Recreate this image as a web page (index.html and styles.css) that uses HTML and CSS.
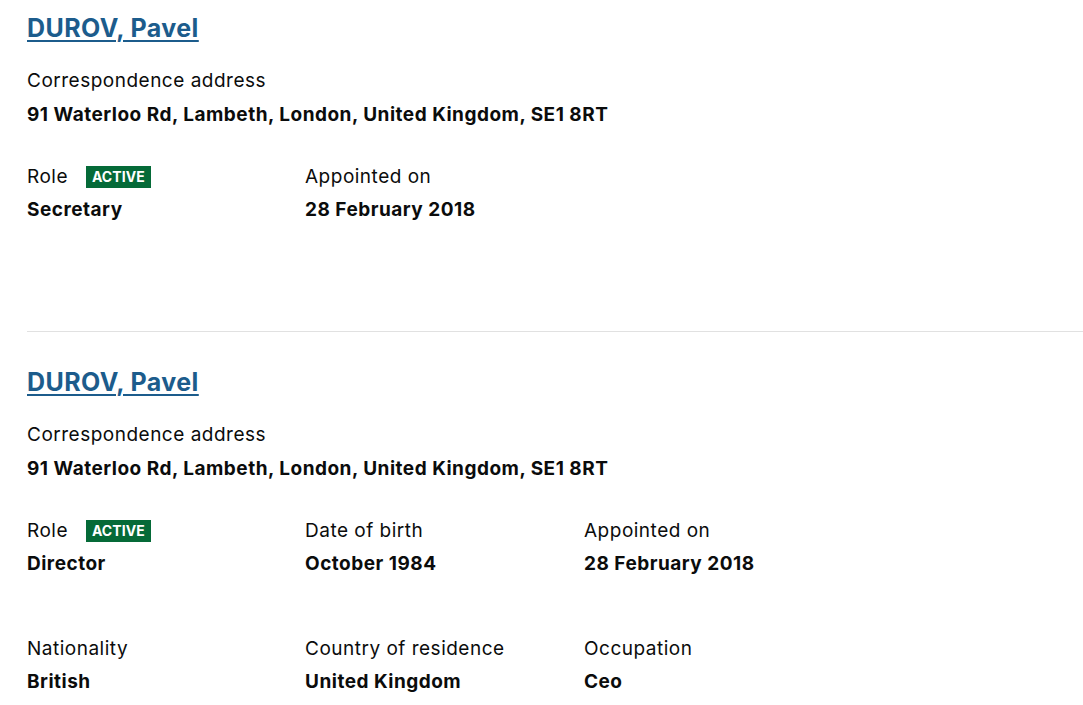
FILE: index.html
```html
<!DOCTYPE html>
<html lang="en">
<head>
<meta charset="utf-8">
<title>Officers</title>
<link rel="stylesheet" href="styles.css">
</head>
<body>
<main class="page">
  <section class="officer">
    <h2 class="officer-name"><a href="#">DUROV, Pavel</a></h2>
    <dl class="field">
      <dt class="label">Correspondence address</dt>
      <dd class="value">91 Waterloo Rd, Lambeth, London, United Kingdom, SE1 8RT</dd>
    </dl>
    <div class="grid">
      <dl class="field">
        <dt class="label">Role <span class="badge">Active</span></dt>
        <dd class="value">Secretary</dd>
      </dl>
      <dl class="field">
        <dt class="label">Appointed on</dt>
        <dd class="value">28 February 2018</dd>
      </dl>
    </div>
  </section>
  <section class="officer">
    <h2 class="officer-name"><a href="#">DUROV, Pavel</a></h2>
    <dl class="field">
      <dt class="label">Correspondence address</dt>
      <dd class="value">91 Waterloo Rd, Lambeth, London, United Kingdom, SE1 8RT</dd>
    </dl>
    <div class="grid">
      <dl class="field">
        <dt class="label">Role <span class="badge">Active</span></dt>
        <dd class="value">Director</dd>
      </dl>
      <dl class="field">
        <dt class="label">Date of birth</dt>
        <dd class="value">October 1984</dd>
      </dl>
      <dl class="field">
        <dt class="label">Appointed on</dt>
        <dd class="value">28 February 2018</dd>
      </dl>
      <dl class="field">
        <dt class="label">Nationality</dt>
        <dd class="value">British</dd>
      </dl>
      <dl class="field">
        <dt class="label">Country of residence</dt>
        <dd class="value">United Kingdom</dd>
      </dl>
      <dl class="field">
        <dt class="label">Occupation</dt>
        <dd class="value">Ceo</dd>
      </dl>
    </div>
  </section>
</main>
</body>
</html>
```
FILE: styles.css
```css
html, body {
  margin: 0;
  padding: 0;
  background: #ffffff;
}
body {
  font-family: Inter, "Open Sans", "Liberation Sans", Arial, sans-serif;
  color: #0b0c0c;
  font-size: 19px;
  line-height: 25px;
  letter-spacing: 0.5px;
}
.page {
  padding: 13px 0 0 27px;
}
.officer {
  padding-bottom: 37px;
}
.officer + .officer {
  border-top: 1px solid #e1e1e1;
  padding-top: 35px;
}
.officer:first-child {
  padding-bottom: 109px;
}
.officer-name {
  margin: 0 0 25px;
  font-size: 25px;
  line-height: 30px;
  font-weight: 700;
  letter-spacing: 0.4px;
}
.officer-name a {
  color: #1c5c8c;
  text-decoration: underline;
  text-underline-offset: 3px;
  text-decoration-thickness: 2px;
}
.field {
  margin: 0 0 37px;
}
.label {
  margin: 0 0 9px;
  font-weight: 400;
}
.value {
  margin: 0;
  font-weight: 700;
}
.grid {
  display: grid;
  grid-template-columns: 278px 279px 279px;
  row-gap: 60px;
}
.grid .field {
  margin: 0;
}
.grid .label {
  margin-bottom: 8px;
}
.badge {
  display: inline-block;
  margin-left: 12px;
  padding: 0 6px;
  height: 22px;
  line-height: 22px;
  background: #056a38;
  color: #ffffff;
  font-size: 14px;
  font-weight: 700;
  letter-spacing: 0.1px;
  text-transform: uppercase;
  vertical-align: 1px;
}
```
